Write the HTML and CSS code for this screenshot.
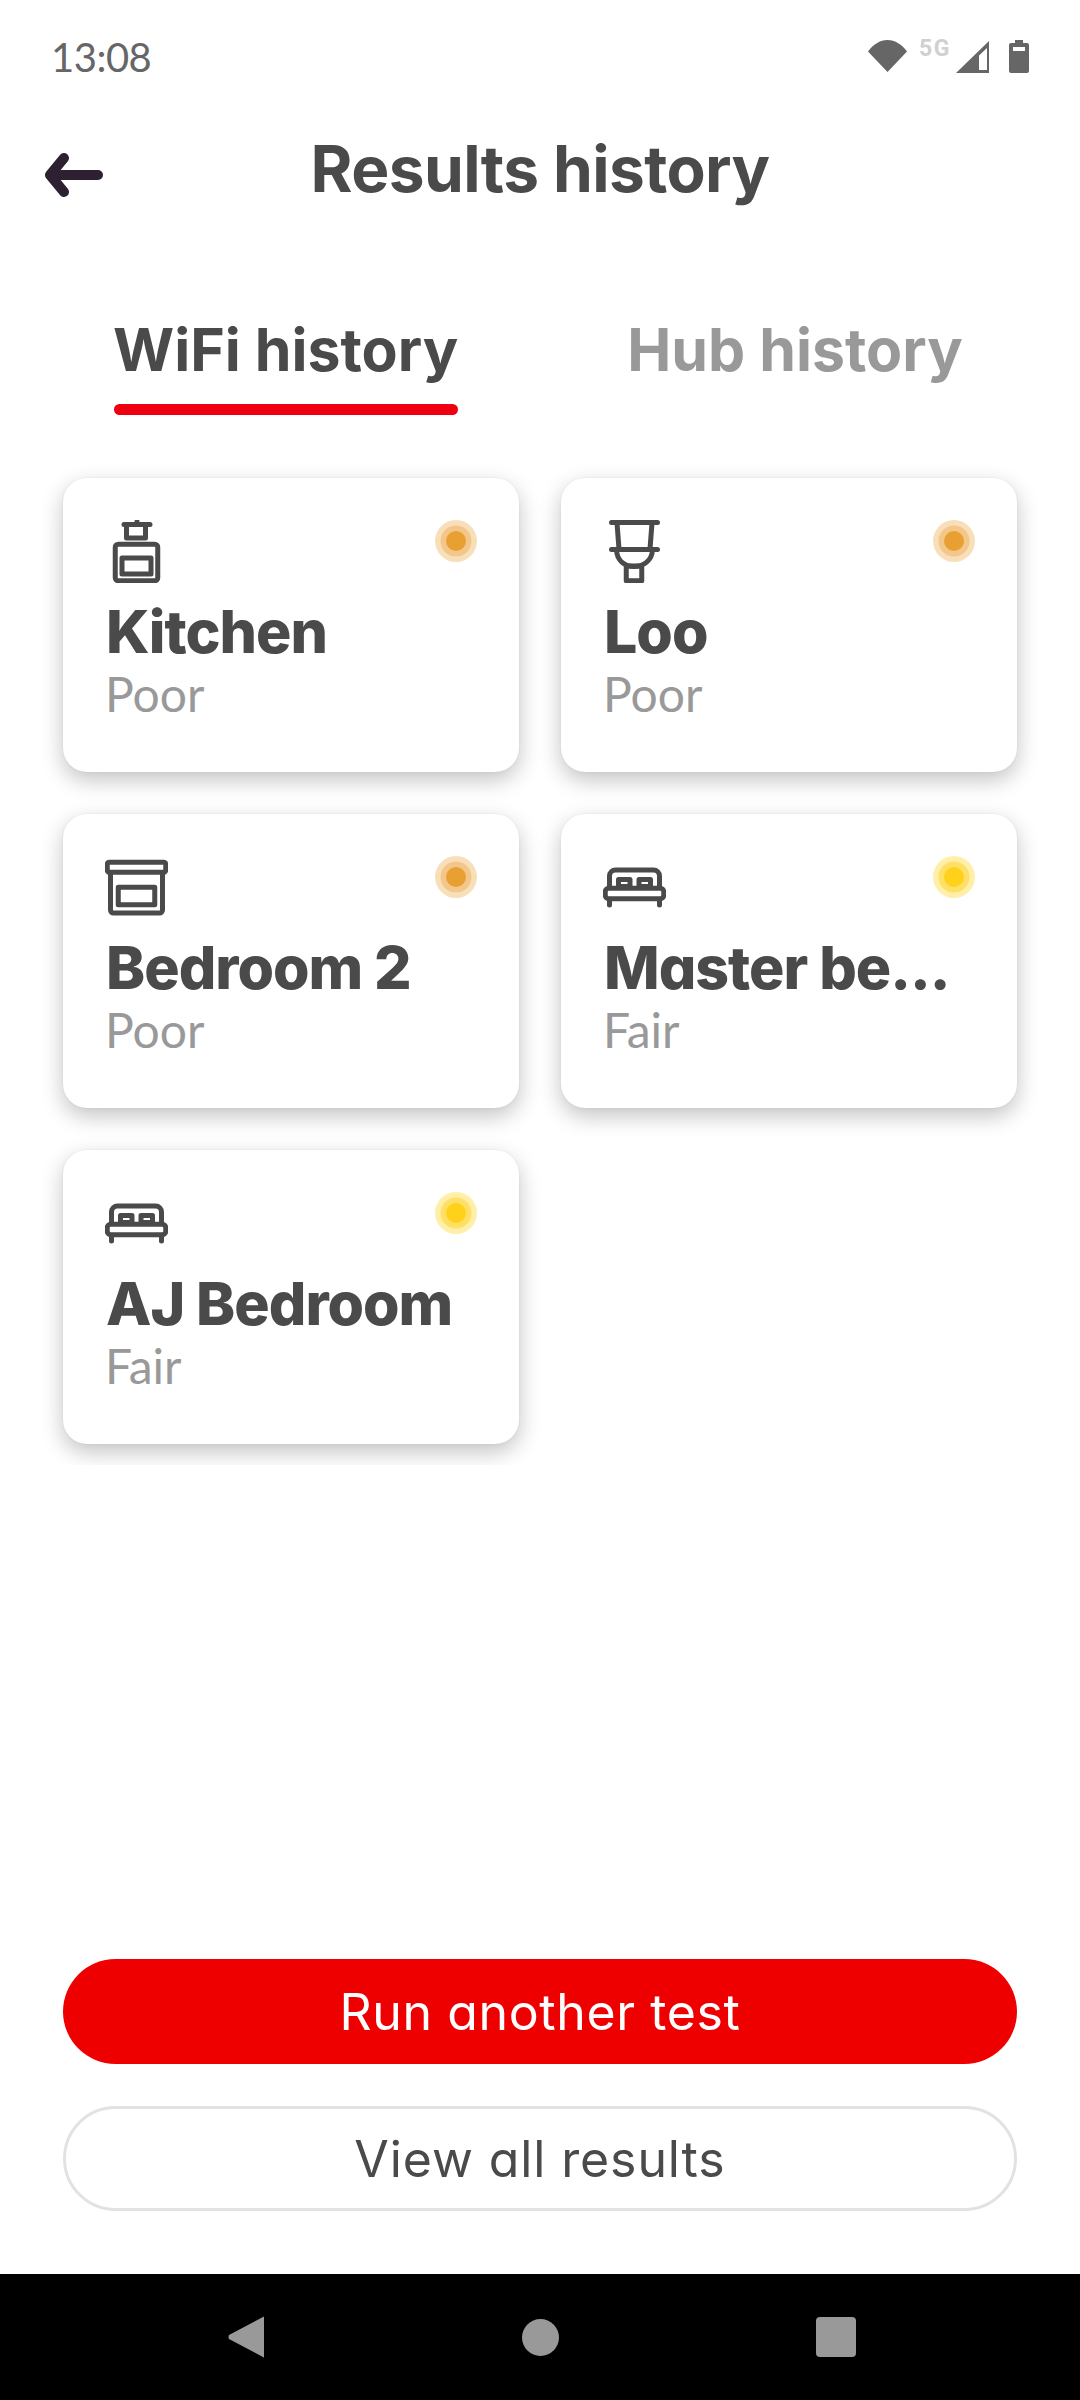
FILE: index.html
```html
<!DOCTYPE html>
<html lang="en">
<head>
<meta charset="utf-8">
<title>Results history</title>
<link rel="stylesheet" href="styles.css">
</head>
<body>
<div class="page">
  <div class="status-bar">
    <span class="time">13:08</span>
    <div class="status-icons">
      <svg class="wifi" viewBox="0 0 39 32"><path d="M0 11.500C5 4.500 12 0 19.500 0S34 4.500 39 11.500L19.500 32Z"/></svg>
      <span class="net">5G</span>
      <svg class="signal" viewBox="0 0 33 32"><path fill-rule="evenodd" d="M33 0V32H0ZM31 7 23 14.500V29H31Z"/></svg>
      <svg class="battery" viewBox="0 0 20 33"><path fill-rule="evenodd" d="M6 0H14V3H18Q20 3 20 5V31Q20 33 18 33H2Q0 33 0 31V5Q0 3 2 3H6ZM4 7V11H16V7Z"/></svg>
    </div>
  </div>

  <header class="top-bar">
    <svg class="back" viewBox="0 0 59 44"><path d="M54 22H6M6 22 20 5M6 22 20 39"/></svg>
    <h1 class="title">Results history</h1>
  </header>

  <nav class="tabs">
    <div class="tab tab-active">WiFi history</div>
    <div class="tab">Hub history</div>
  </nav>

  <main class="results">
    <div class="grid">
      <article class="card">
        <svg class="icon" viewBox="0 0 63 63"><rect x="10.250" y="24.250" width="42.500" height="36.500" rx="3"/><rect x="17" y="38" width="29" height="16"/><path d="M21.500 5V18H40.500V5M19 4.500H45M32 1.500V4"/></svg>
        <h2 class="name">Kitchen</h2>
        <p class="quality">Poor</p>
        <span class="dot dot-poor"></span>
      </article>
      <article class="card">
        <svg class="icon" viewBox="0 0 63 63"><path d="M8.500 2.500H54.500M8.500 29.500H54.500M14 3 16 29M49 3 47 29M13.500 30C14 41 22 46.500 31 46.500S49 41 49.500 30"/><rect x="23.250" y="46" width="15.500" height="14.750"/></svg>
        <h2 class="name">Loo</h2>
        <p class="quality">Poor</p>
        <span class="dot dot-poor"></span>
      </article>
      <article class="card">
        <svg class="icon" viewBox="0 0 63 63"><rect x="2.250" y="6.250" width="58.500" height="10" rx="2"/><path d="M5.500 17V54A3 3 0 0 0 8.500 57H54.500A3 3 0 0 0 57.500 54V17"/><rect x="13.250" y="31.250" width="36.500" height="17.500"/></svg>
        <h2 class="name">Bedroom 2</h2>
        <p class="quality">Poor</p>
        <span class="dot dot-poor"></span>
      </article>
      <article class="card">
        <svg class="icon" viewBox="0 0 63 63"><path d="M6.500 30V20A6 6 0 0 1 12.500 14H50.500A6 6 0 0 1 56.500 20V30"/><rect x="15.500" y="23.500" width="11.500" height="7"/><rect x="36" y="23.500" width="11.500" height="7"/><rect x="2.250" y="32.250" width="58.500" height="10.500" rx="3.500"/><path d="M6.500 44V49M56.500 44V49"/></svg>
        <h2 class="name">Master be...</h2>
        <p class="quality">Fair</p>
        <span class="dot dot-fair"></span>
      </article>
      <article class="card">
        <svg class="icon" viewBox="0 0 63 63"><path d="M6.500 30V20A6 6 0 0 1 12.500 14H50.500A6 6 0 0 1 56.500 20V30"/><rect x="15.500" y="23.500" width="11.500" height="7"/><rect x="36" y="23.500" width="11.500" height="7"/><rect x="2.250" y="32.250" width="58.500" height="10.500" rx="3.500"/><path d="M6.500 44V49M56.500 44V49"/></svg>
        <h2 class="name">AJ Bedroom</h2>
        <p class="quality">Fair</p>
        <span class="dot dot-fair"></span>
      </article>
    </div>
  </main>

  <div class="actions">
    <button class="btn btn-primary">Run another test</button>
    <button class="btn btn-outline">View all results</button>
  </div>

  <div class="nav-bar">
    <svg class="nav-back" viewBox="0 0 37 42"><path d="M36 1V41Q36 42 35 41L1 23Q0 21 1 19L35 1Q36 0 36 1Z"/></svg>
    <span class="nav-home"></span>
    <span class="nav-recent"></span>
  </div>
</div>
</body>
</html>
```

FILE: styles.css
```css
* { box-sizing: border-box; }
html, body { margin: 0; padding: 0; background: #fff; }
.page {
  width: 1080px;
  height: 2400px;
  display: flex;
  flex-direction: column;
  font-family: "Inter", "Liberation Sans", sans-serif;
  font-feature-settings: "cv11" 1;
  color: #4a4a4a;
  overflow: hidden;
}
.status-bar {
  flex: none;
  height: 120px;
  padding: 0 51px;
  display: flex;
  justify-content: space-between;
  align-items: flex-start;
}
.time {
  margin-top: 33px;
  font-family: "Lato", sans-serif;
  font-size: 40px;
  line-height: 48px;
  letter-spacing: -0.5px;
  color: #666;
}
.status-icons {
  display: flex;
  align-items: flex-start;
  margin-top: 40px;
}
.wifi { width: 39px; height: 32px; fill: #666; }
.net {
  width: 32px;
  margin-left: 12px;
  margin-right: 5px;
  font-family: "Roboto", sans-serif;
  font-weight: 700;
  font-size: 23px;
  line-height: 18px;
  letter-spacing: 1.5px;
  color: #d0d0d0;
}
.signal { width: 33px; height: 32px; fill: #666; margin-top: 1px; }
.battery { width: 20px; height: 33px; fill: #666; margin-left: 20px; }

.top-bar {
  flex: none;
  height: 96px;
  padding-left: 44px;
  display: grid;
  grid-template-columns: 59px 1fr 103px;
  align-items: center;
}
.back {
  width: 59px;
  height: 44px;
  margin-top: 14px;
  fill: none;
  stroke: #2d2030;
  stroke-width: 10;
  stroke-linecap: round;
  stroke-linejoin: round;
}
.title {
  margin: 2px 0 0;
  text-align: center;
  font-size: 64px;
  line-height: 76px;
  font-weight: 700;
  letter-spacing: -0.6px;
}

.tabs {
  flex: none;
  height: 243px;
  padding: 100px 0 0 113px;
  display: flex;
  align-items: flex-start;
  gap: 169px;
}
.tab {
  font-size: 59px;
  line-height: 68px;
  font-weight: 700;
  color: #999;
  white-space: nowrap;
}
.tab-active { color: #4a4a4a; }
.tab-active::after {
  content: "";
  display: block;
  height: 11px;
  margin: 20px 0 0 1px;
  border-radius: 6px;
  background: #ee0011;
}

.results {
  flex: none;
  height: 1006px;
  padding: 0 63px;
  overflow: hidden;
}
.grid {
  display: grid;
  grid-template-columns: 456px 456px;
  grid-auto-rows: 294px;
  gap: 42px;
  padding-top: 19px;
}
.card {
  position: relative;
  padding: 42px;
  background: #fff;
  border-radius: 24px;
  box-shadow: 0 8px 22px rgba(0, 0, 0, 0.24), 0 0 2px rgba(0, 0, 0, 0.08);
}
.icon {
  display: block;
  width: 63px;
  height: 63px;
  fill: none;
  stroke: #4a4a4a;
  stroke-width: 5;
  stroke-linecap: round;
  stroke-linejoin: round;
}
.name {
  margin: 15px 0 0 1px;
  font-size: 59px;
  line-height: 68px;
  font-weight: 800;
  letter-spacing: -1px;
  white-space: nowrap;
}
.quality {
  margin: 1px 0 0;
  font-family: "Lato", sans-serif;
  font-size: 48px;
  line-height: 54px;
  color: #999;
}
.dot {
  position: absolute;
  top: 53px;
  right: 53px;
  width: 20px;
  height: 20px;
  border-radius: 50%;
}
.dot-poor {
  background: #e8a033;
  box-shadow: 0 0 0 5.500px #f3c68a, 0 0 0 11px #f8dfba;
}
.dot-fair {
  background: #ffd11a;
  box-shadow: 0 0 0 5.500px #ffe066, 0 0 0 11px #ffefa8;
}

.actions {
  flex: none;
  padding: 0 63px;
  display: flex;
  flex-direction: column;
  gap: 42px;
  margin-top: 494px;
}
.btn {
  flex: none;
  height: 105px;
  border-radius: 53px;
  font-family: inherit;
  font-feature-settings: inherit;
  font-size: 50px;
  font-weight: 400;
}
.btn-primary { border: 0; background: #ee0000; color: #fff; letter-spacing: 0.6px; }
.btn-outline { border: 3px solid #e2e2e2; background: #fff; color: #4a4a4a; letter-spacing: 0.9px; }

.nav-bar {
  flex: none;
  height: 126px;
  margin-top: auto;
  padding-left: 3px;
  background: #000;
  display: flex;
  align-items: center;
  justify-content: center;
  gap: 257px;
}
.nav-back { width: 37px; height: 42px; fill: #999; }
.nav-home { width: 37px; height: 37px; border-radius: 50%; background: #999; }
.nav-recent { width: 40px; height: 40px; border-radius: 4px; background: #999; }
```
